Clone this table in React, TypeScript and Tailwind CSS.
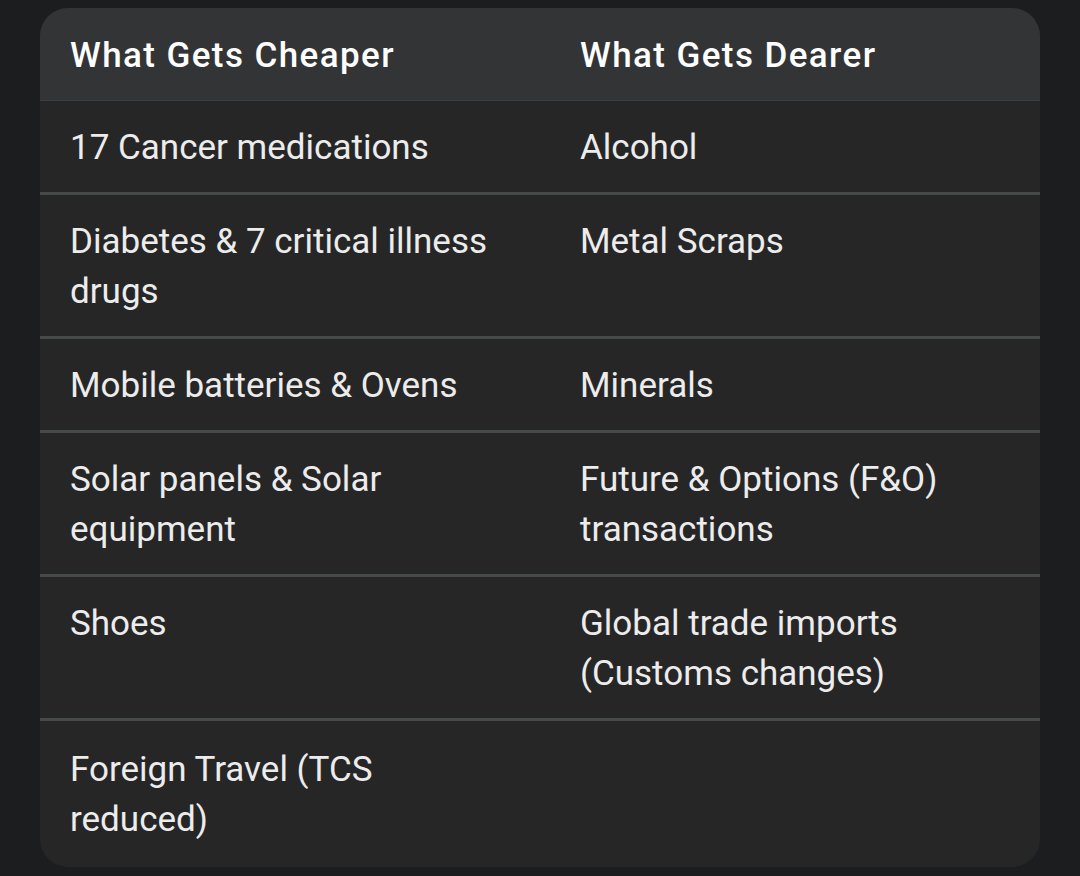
const rows: [string, string][] = [
  ["17 Cancer medications", "Alcohol"],
  ["Diabetes & 7 critical illness drugs", "Metal Scraps"],
  ["Mobile batteries & Ovens", "Minerals"],
  ["Solar panels & Solar equipment", "Future & Options (F&O) transactions"],
  ["Shoes", "Global trade imports (Customs changes)"],
  ["Foreign Travel (TCS reduced)", ""],
];

export default function App() {
  return (
    <div className="min-h-[876px] w-[1080px] bg-[#1c1d1f] pt-2 pl-10 font-['Roboto',sans-serif] text-[#ececec]">
      <div className="w-[1000px] overflow-hidden rounded-[28px] bg-[#262626]">
        {/* header */}
        <div className="grid grid-cols-[510px_490px] border-b border-[#3e3f41] bg-[#333436] text-[35px] font-medium leading-[50px] tracking-[1.4px] text-white">
          <div className="px-[30px] pt-[23px] pb-[19px]">What Gets Cheaper</div>
          <div className="px-[30px] pt-[23px] pb-[19px]">What Gets Dearer</div>
        </div>

        {rows.map(([cheap, dear], i) => {
          const last = i === rows.length - 1;
          return (
            <div
              key={i}
              className={`grid grid-cols-[510px_490px] text-[35px] leading-[50px] ${
                last ? "pt-[2px] pb-[3px]" : "border-b-[3px] border-[#474a4b]"
              }`}
            >
              <div className="pl-[30px] pr-[50px] pt-[22px] pb-[19px]">{cheap}</div>
              <div className="px-[30px] pt-[22px] pb-[19px]">{dear}</div>
            </div>
          );
        })}
      </div>
    </div>
  );
}
